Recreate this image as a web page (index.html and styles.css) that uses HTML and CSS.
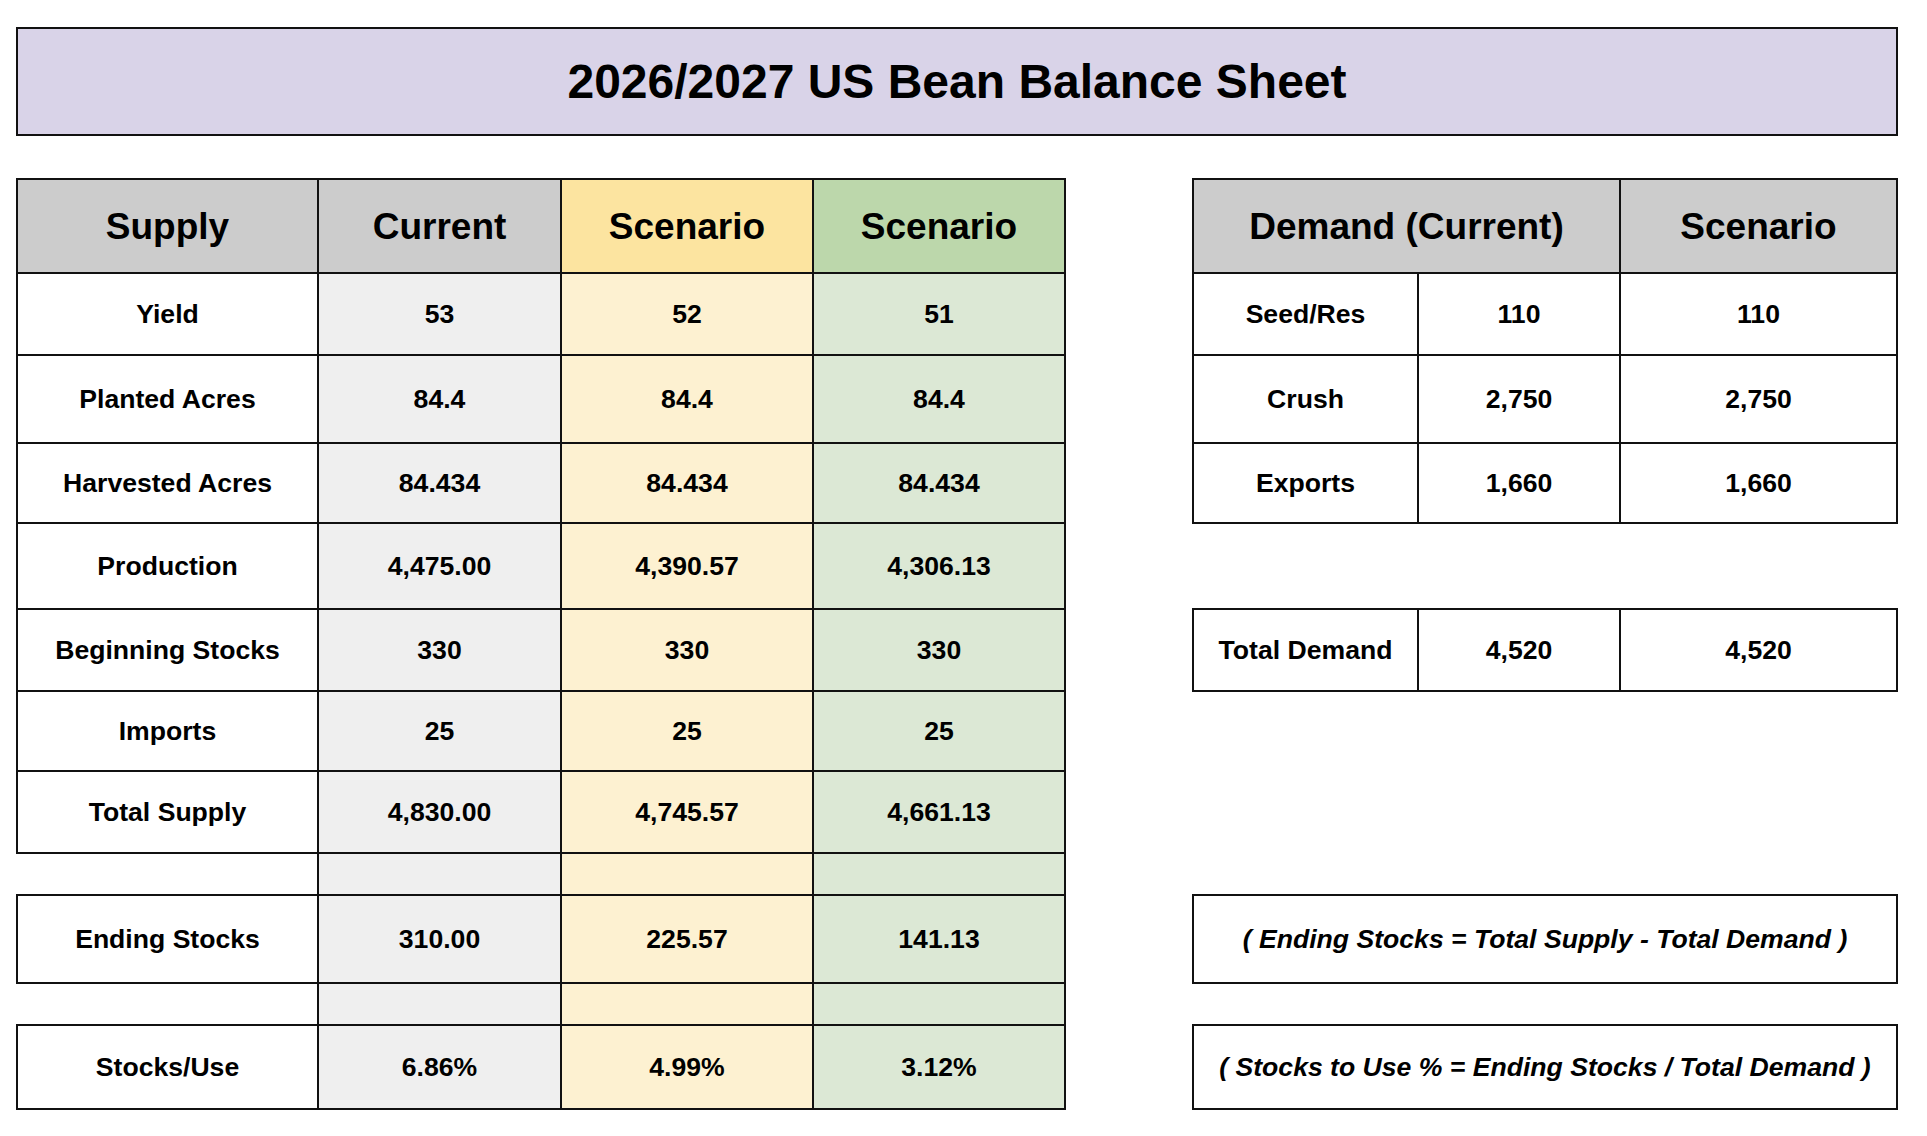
FILE: index.html
```html
<!DOCTYPE html>
<html lang="en">
<head>
<meta charset="utf-8">
<title>2026/2027 US Bean Balance Sheet</title>
<link rel="stylesheet" href="styles.css">
</head>
<body>
<div class="page">
  <header class="title">2026/2027 US Bean Balance Sheet</header>
  <div class="tables">
    <table class="sheet supply">
      <colgroup>
        <col class="w-label"><col class="w-cur"><col class="w-s1"><col class="w-s2">
      </colgroup>
      <tr class="r-head">
        <th class="hd">Supply</th><th class="hd">Current</th><th class="hd-yel">Scenario</th><th class="hd-grn">Scenario</th>
      </tr>
      <tr class="r-yield">
        <td>Yield</td><td class="cur">53</td><td class="yel">52</td><td class="grn">51</td>
      </tr>
      <tr class="r-planted">
        <td>Planted Acres</td><td class="cur">84.4</td><td class="yel">84.4</td><td class="grn">84.4</td>
      </tr>
      <tr class="r-harv">
        <td>Harvested Acres</td><td class="cur">84.434</td><td class="yel">84.434</td><td class="grn">84.434</td>
      </tr>
      <tr class="r-prod">
        <td>Production</td><td class="cur">4,475.00</td><td class="yel">4,390.57</td><td class="grn">4,306.13</td>
      </tr>
      <tr class="r-beg">
        <td>Beginning Stocks</td><td class="cur">330</td><td class="yel">330</td><td class="grn">330</td>
      </tr>
      <tr class="r-imp">
        <td>Imports</td><td class="cur">25</td><td class="yel">25</td><td class="grn">25</td>
      </tr>
      <tr class="r-total">
        <td>Total Supply</td><td class="cur">4,830.00</td><td class="yel">4,745.57</td><td class="grn">4,661.13</td>
      </tr>
      <tr class="r-gap">
        <td class="blank-label"></td><td class="cur"></td><td class="yel"></td><td class="grn"></td>
      </tr>
      <tr class="r-end">
        <td>Ending Stocks</td><td class="cur">310.00</td><td class="yel">225.57</td><td class="grn">141.13</td>
      </tr>
      <tr class="r-gap">
        <td class="blank-label"></td><td class="cur"></td><td class="yel"></td><td class="grn"></td>
      </tr>
      <tr class="r-su">
        <td>Stocks/Use</td><td class="cur">6.86%</td><td class="yel">4.99%</td><td class="grn">3.12%</td>
      </tr>
    </table>

    <table class="sheet demand">
      <colgroup>
        <col class="w-dlabel"><col class="w-dcur"><col class="w-dscen">
      </colgroup>
      <tr class="r-head">
        <th class="hd" colspan="2">Demand (Current)</th><th class="hd">Scenario</th>
      </tr>
      <tr class="r-yield">
        <td>Seed/Res</td><td>110</td><td>110</td>
      </tr>
      <tr class="r-planted">
        <td>Crush</td><td>2,750</td><td>2,750</td>
      </tr>
      <tr class="r-harv">
        <td>Exports</td><td>1,660</td><td>1,660</td>
      </tr>
      <tr class="r-prod">
        <td class="empty"></td><td class="empty"></td><td class="empty"></td>
      </tr>
      <tr class="r-beg">
        <td>Total Demand</td><td>4,520</td><td>4,520</td>
      </tr>
      <tr class="r-imp">
        <td class="empty"></td><td class="empty"></td><td class="empty"></td>
      </tr>
      <tr class="r-total">
        <td class="empty"></td><td class="empty"></td><td class="empty"></td>
      </tr>
      <tr class="r-gap">
        <td class="empty"></td><td class="empty"></td><td class="empty"></td>
      </tr>
      <tr class="r-end">
        <td class="formula" colspan="3">( Ending Stocks = Total Supply - Total Demand )</td>
      </tr>
      <tr class="r-gap">
        <td class="empty"></td><td class="empty"></td><td class="empty"></td>
      </tr>
      <tr class="r-su">
        <td class="formula" colspan="3">( Stocks to Use % = Ending Stocks / Total Demand )</td>
      </tr>
    </table>
  </div>
</div>
</body>
</html>
```

FILE: styles.css
```css
* {
  box-sizing: border-box;
}

html, body {
  margin: 0;
  padding: 0;
  background: #ffffff;
}

body {
  font-family: "Liberation Sans", Arial, "Helvetica Neue", sans-serif;
  color: #000000;
}

.page {
  width: 1882px;
  margin-left: 16px;
  padding-top: 27px;
}

.title {
  height: 109px;
  border: 2px solid #111111;
  background: #d9d3e8;
  display: flex;
  align-items: center;
  justify-content: center;
  font-size: 48px;
  font-weight: 700;
  letter-spacing: 0;
}

.tables {
  margin-top: 42px;
  display: flex;
  justify-content: space-between;
  align-items: flex-start;
}

.sheet {
  border-collapse: collapse;
  table-layout: fixed;
}

.sheet th,
.sheet td {
  border: 2px solid #111111;
  padding: 0;
  text-align: center;
  vertical-align: middle;
  font-weight: 700;
  font-size: 26.6px;
  line-height: 1;
  white-space: nowrap;
}

.sheet th {
  font-size: 37px;
}

.supply {
  width: 1048px;
}

.demand {
  width: 704px;
}

.w-label { width: 301px; }
.w-cur { width: 243px; }
.w-s1 { width: 252px; }
.w-s2 { width: 252px; }

.w-dlabel { width: 225px; }
.w-dcur { width: 202px; }
.w-dscen { width: 277px; }

.r-head { height: 94px; }
.r-yield { height: 82px; }
.r-planted { height: 88px; }
.r-harv { height: 80px; }
.r-prod { height: 86px; }
.r-beg { height: 82px; }
.r-imp { height: 80px; }
.r-total { height: 82px; }
.r-gap { height: 42px; }
.r-end { height: 88px; }
.r-su { height: 84px; }

.hd { background: #cccccc; }
.hd-yel { background: #fce4a0; }
.hd-grn { background: #bcd7ab; }

.cur { background: #efefef; }
.yel { background: #fdf1d1; }
.grn { background: #dce8d5; }

.sheet td.blank-label {
  border-left: none;
  background: #ffffff;
}

.sheet td.empty {
  border: none;
  background: #ffffff;
}

.sheet td.formula {
  font-style: italic;
}
```
